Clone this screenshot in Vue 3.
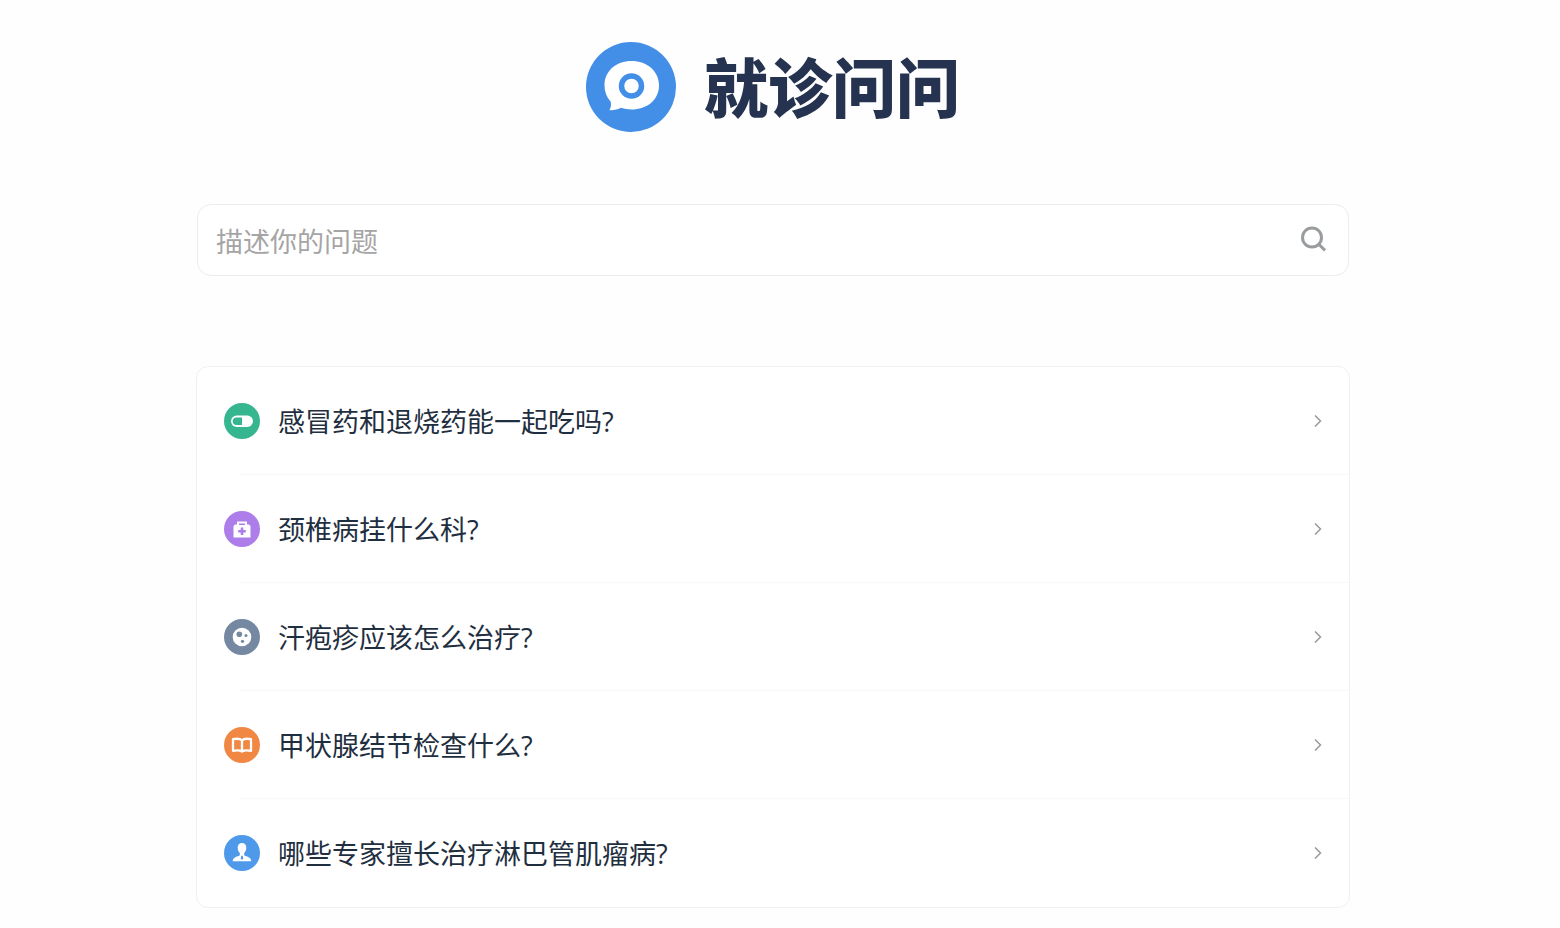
<template>
  <main class="page">
    <header class="brand">
      <svg class="brand-logo" viewBox="0 0 90 90" aria-hidden="true">
        <circle cx="45" cy="45" r="45" fill="#438fe7" />
        <path
          d="M45.5 19C61 19 73 29 73 43.500C73 58 61 67.500 45.500 67.500C42 67.500 38.500 67 35 65.800C32 67.600 28 68.400 23.500 68.200C25 65.500 25.400 62.500 24.600 59.500C20.500 55 18.500 49.500 18.500 43.500C18.500 29 30 19 45.500 19Z"
          fill="#fff"
        />
        <circle cx="45.500" cy="44" r="10" fill="none" stroke="#438fe7" stroke-width="5.500" />
      </svg>
      <h1 class="brand-title">就诊问问</h1>
    </header>

    <form class="search" @submit.prevent="onSearch">
      <input
        v-model="keyword"
        class="search-input"
        type="text"
        placeholder="描述你的问题"
        aria-label="描述你的问题"
      />
      <button class="search-button" type="submit" aria-label="搜索">
        <svg viewBox="0 0 28 28" width="28" height="28">
          <circle cx="12" cy="12.500" r="9.500" />
          <path d="M18 18.500L25 25.300" />
        </svg>
      </button>
    </form>

    <ul class="question-list">
      <li v-for="item in questions" :key="item.icon" class="question-item">
        <a class="question-link" href="#" @click.prevent="keyword = item.text">
          <svg :class="['question-icon', item.icon]" viewBox="0 0 36 36" aria-hidden="true">
            <circle class="icon-bg" cx="18" cy="18" r="18" />
            <template v-if="item.icon === 'pill'">
              <rect x="7" y="12.500" width="22" height="11.500" rx="5.750" fill="#fff" />
              <path class="icon-bg" d="M18 14.500V22H12.500A3.750 3.750 0 0 1 12.500 14.500Z" />
            </template>
            <template v-else-if="item.icon === 'clinic'">
              <path
                d="M13 10.500H23V13.500H25L26.500 15V26.500H9.500V15L11 13.500H13Z"
                fill="#fff"
              />
              <path class="icon-bg" d="M15 12.500H21V14H15Z" />
              <path class="icon-bg" d="M16.700 16.500H19.300V19H21.800V21.600H19.300V24H16.700V21.600H14.200V19H16.700Z" />
            </template>
            <template v-else-if="item.icon === 'skin'">
              <circle cx="18" cy="18" r="9.300" fill="#fff" />
              <circle class="icon-bg" cx="15.300" cy="15.300" r="2.800" />
              <circle class="icon-bg" cx="22" cy="16.500" r="1.500" />
              <circle class="icon-bg" cx="18.500" cy="22.300" r="1.600" />
            </template>
            <template v-else-if="item.icon === 'book'">
              <path
                d="M18 13.500C16.500 11.800 12.500 11.500 9 12.200V23.800C12.500 23.200 16 23.200 18 24.500C20 23.200 23.500 23.200 27 23.800V12.200C23.500 11.500 19.500 11.800 18 13.500ZM18 13.500V24"
                fill="none"
                stroke="#fff"
                stroke-width="2.300"
                stroke-linejoin="round"
              />
            </template>
            <template v-else>
              <path
                d="M18 8C21 8 22.500 10 22.300 13C22.200 15.500 21.300 16.800 20.200 18V20.300C22 21.800 27 21.800 27.300 26.200H8.700C9 21.800 14 21.800 15.800 20.300V18C14.700 16.800 13.800 15.500 13.700 13C13.500 10 15 8 18 8Z"
                fill="#fff"
              />
              <path class="icon-bg" d="M17.300 20.800H18.700L19.200 23.500L18 25L16.800 23.500Z" />
            </template>
          </svg>
          <span class="question-text">{{ item.text }}</span>
          <svg class="arrow" viewBox="0 0 8 14" aria-hidden="true">
            <path d="M1 1.500L6.500 7L1 12.500" />
          </svg>
        </a>
      </li>
    </ul>
  </main>
</template>

<script setup>
import { ref } from 'vue'

const keyword = ref('')

const questions = [
  { icon: 'pill', text: '感冒药和退烧药能一起吃吗?' },
  { icon: 'clinic', text: '颈椎病挂什么科?' },
  { icon: 'skin', text: '汗疱疹应该怎么治疗?' },
  { icon: 'book', text: '甲状腺结节检查什么?' },
  { icon: 'doctor', text: '哪些专家擅长治疗淋巴管肌瘤病?' },
]

function onSearch() {
  keyword.value = keyword.value.trim()
}
</script>

<style>
body {
  margin: 0;
  background: #fefefe;
}
</style>

<style scoped>
.page {
  box-sizing: border-box;
  max-width: 1182px;
  margin: 0 auto;
  padding: 42px 21px 20px 7px;
  font-family: 'Open Sans', 'Noto Sans CJK SC', sans-serif;
}

.brand {
  display: flex;
  justify-content: center;
  gap: 28px;
  height: 90px;
}

.brand-logo {
  width: 90px;
  height: 90px;
}

.brand-title {
  margin: 0;
  color: #253350;
  font-family: 'Noto Sans CJK SC', sans-serif;
  font-size: 64px;
  font-weight: 900;
  line-height: 84px;
}

.search {
  display: flex;
  align-items: center;
  box-sizing: border-box;
  height: 72px;
  margin: 72px 1px 90px;
  padding: 0 20px 0 18px;
  border: 1px solid #ececec;
  border-radius: 14px;
  background: #fff;
}

.search-input {
  flex: 1;
  min-width: 0;
  height: 60px;
  padding: 2px 0 0;
  border: none;
  outline: none;
  background: transparent;
  color: #1f2f3f;
  font-family: inherit;
  font-size: 27px;
}

.search-input::placeholder {
  color: #a5a5a5;
  opacity: 1;
}

.search-button {
  display: flex;
  padding: 0 0 3px;
  border: none;
  background: none;
  cursor: pointer;
}

.search-button svg {
  fill: none;
  stroke: #999c9f;
  stroke-width: 3;
}

.question-list {
  margin: 0;
  padding: 0;
  border: 1px solid #f0f0f0;
  border-radius: 12px;
  background: #fff;
  list-style: none;
}

/* divider starts under the middle of the icon */
.question-item:not(:last-child) {
  background: linear-gradient(#f8f8f8, #f8f8f8) right bottom / calc(100% - 42px) 1px no-repeat;
}

.question-link {
  display: flex;
  align-items: center;
  height: 108px;
  padding: 0 27px;
  color: #1f2f3f;
  text-decoration: none;
}

.question-icon {
  flex: none;
  width: 36px;
  height: 36px;
  margin-right: 18px;
}

.pill .icon-bg {
  fill: #36b68f;
}

.clinic .icon-bg {
  fill: #ad7de9;
}

.skin .icon-bg {
  fill: #7488a1;
}

.book .icon-bg {
  fill: #f08844;
}

.doctor .icon-bg {
  fill: #4f99eb;
}

.question-text {
  flex: 1;
  padding-top: 2px;
  font-size: 27px;
  line-height: 40px;
}

.arrow {
  flex: none;
  width: 8px;
  height: 14px;
  fill: none;
  stroke: #999;
  stroke-width: 1.5;
}
</style>
